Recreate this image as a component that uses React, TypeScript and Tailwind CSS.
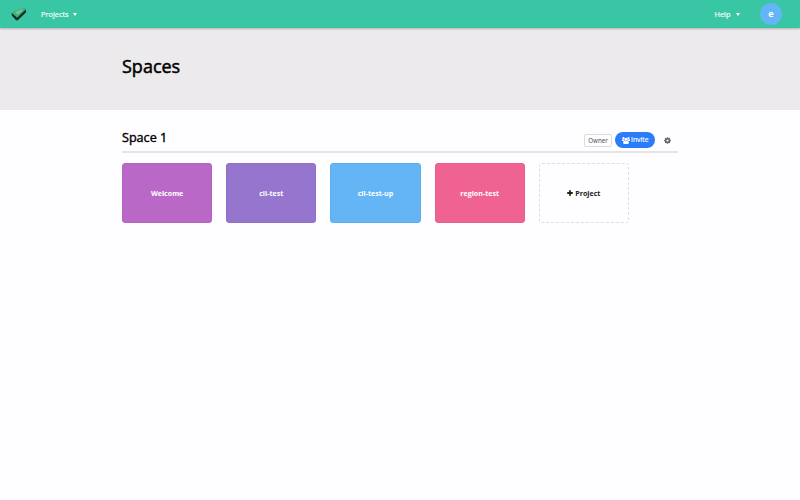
import React from "react";

const projects = [
  { name: "Welcome", style: "bg-[#ba68c8] border-[#b264bf]" },
  { name: "cli-test", style: "bg-[#9575cd] border-[#8e70c4]" },
  { name: "cli-test-up", style: "bg-[#64b5f6] border-[#61afed]" },
  { name: "region-test", style: "bg-[#f06292] border-[#e75f8d]" },
];

function Logo() {
  return (
    <svg className="block h-[14px] w-4" viewBox="0 0 16 14" aria-hidden="true">
      <path d="M.6 5.8 6 9.7 14.9 2v3.6L6.5 13.5 4.8 13 .8 8.5Z" fill="#142d25" />
      <path d="M.6 5.8 4 3.8 13.6.3 15 2 6.2 10.7Z" fill="#43ad7b" />
      <path d="M4 5.2 12.8 1.2 10 5.2 6.2 7.6Z" fill="#6dc893" />
    </svg>
  );
}

function Caret() {
  return <span className="border-x-[2.5px] border-t-[3px] border-x-transparent border-t-white" />;
}

function UsersIcon() {
  return (
    <svg className="h-[7px] w-[8px]" viewBox="0 0 16 14" fill="currentColor" aria-hidden="true">
      <circle cx="3" cy="2.4" r="2.2" />
      <circle cx="13" cy="2.4" r="2.2" />
      <circle cx="8" cy="4.3" r="3" />
      <path d="M0 8V6q0-1.6 1.3-1.6L4.1 5q.1 1.2.8 2.2Q3.6 7.2 2.8 8ZM16 8V6q0-1.6-1.3-1.6L11.9 5q-.1 1.2-.8 2.2 1.3 0 2.1.8ZM5 7.6q3 1.5 6 0 2.7 0 2.7 4 0 2.4-2.2 2.4h-7q-2.2 0-2.2-2.4 0-4 2.7-4Z" />
    </svg>
  );
}

function GearIcon() {
  return (
    <svg className="size-[7px]" viewBox="0 0 14 14" fill="none" stroke="currentColor" aria-hidden="true">
      <circle cx="7" cy="7" r="3.7" strokeWidth="2.9" />
      <path d="M7 .4v2.6M7 11v2.6M.4 7h2.6M11 7h2.6M2.4 2.4l1.7 1.7M9.9 9.9l1.7 1.7M2.4 11.6l1.7-1.7M9.9 4.1l1.7-1.7" strokeWidth="2.6" />
    </svg>
  );
}

function PlusIcon() {
  return (
    <svg className="size-[6px]" viewBox="0 0 12 12" aria-hidden="true">
      <path d="M6 .5v11M.5 6h11" stroke="currentColor" strokeWidth="3.6" />
    </svg>
  );
}

export default function App() {
  return (
    <div className="h-[500px] w-[800px] overflow-hidden bg-[#fefdff] font-['Open_Sans','Noto_Sans',sans-serif] text-black">
      <header className="relative flex h-7 items-center bg-[#39c6a5] text-[7.4px] text-white shadow-[0_1px_2px_rgba(0,0,0,0.25)]">
        <div className="ml-[11px]"><Logo /></div>
        <button className="ml-[14px] flex items-center gap-1 pt-px leading-none [-webkit-text-stroke:0.15px_white]"><span>Projects</span><Caret /></button>
        <button className="ml-auto flex items-center gap-[5px] pt-px leading-none [-webkit-text-stroke:0.15px_white]"><span>Help</span><Caret /></button>
        <div className="ml-[20.5px] mr-[18px] flex size-[22px] items-center justify-center rounded-full bg-[#64b5f6] text-[9px] font-bold">e</div>
      </header>
      <section className="h-[82px] bg-[#eceaed] pl-[122px] pt-[25px]">
        <h1 className="text-[18px] leading-[26px] font-normal [-webkit-text-stroke:0.5px_black]">Spaces</h1>
      </section>
      <main className="ml-[122px] w-[556px] pt-[18px]">
        <div className="flex h-[25px] items-start justify-between border-b-2 border-[#e5e4e7]">
          <h2 className="text-[12.6px] leading-[20px] font-normal [-webkit-text-stroke:0.4px_black]">Space 1</h2>
          <div className="flex items-center pt-1">
            <span className="flex h-[13px] w-7 items-center justify-center rounded-[2px] border border-[#dcdbdf] pt-px text-[6.2px] text-[#444]">Owner</span>
            <button className="ml-[3px] flex h-4 w-10 items-center justify-center gap-[1.5px] rounded-full bg-[#2b7bfa] text-[6.8px] text-white [-webkit-text-stroke:0.15px_white]"><UsersIcon />Invite</button>
            <span className="mr-[7px] ml-[9px] text-[#606064]"><GearIcon /></span>
          </div>
        </div>
        <div className="mt-[10px] flex gap-[14px] text-[7.1px] leading-[10px] font-bold">
          {projects.map((project) => (
            <button key={project.name} className={`flex h-[60px] w-[90.2px] items-center justify-center rounded-[3px] border pb-px text-white ${project.style}`}>{project.name}</button>
          ))}
          <button className="flex h-[60px] w-[90.2px] items-center justify-center gap-[2px] rounded-[3px] border border-dashed border-[#dedde1] pb-px text-[#222]"><PlusIcon />Project</button>
        </div>
      </main>
    </div>
  );
}
